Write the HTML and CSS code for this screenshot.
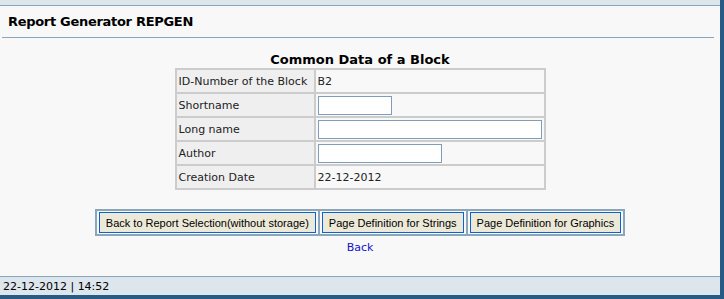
FILE: index.html
```html
<!DOCTYPE html>
<html lang="en">
<head>
    <meta charset="UTF-8">
    <title>Report Generator REPGEN</title>
    <link rel="stylesheet" href="styles.css">
</head>
<body>
    <div class="frame">
        <div class="topbar"></div>

        <div class="header">
            <h1>Report Generator REPGEN</h1>
        </div>

        <div class="main">
            <table class="data-table">
                <caption>Common Data of a Block</caption>
                <tr>
                    <td class="label">ID-Number of the Block</td>
                    <td class="value">B2</td>
                </tr>
                <tr>
                    <td class="label">Shortname</td>
                    <td class="value"><input type="text" class="field field-short" autofocus></td>
                </tr>
                <tr>
                    <td class="label">Long name</td>
                    <td class="value"><input type="text" class="field field-long"></td>
                </tr>
                <tr>
                    <td class="label">Author</td>
                    <td class="value"><input type="text" class="field field-mid"></td>
                </tr>
                <tr>
                    <td class="label">Creation Date</td>
                    <td class="value">22-12-2012</td>
                </tr>
            </table>

            <table class="button-table">
                <tr>
                    <td><button class="btn">Back to Report Selection(without storage)</button></td>
                    <td><button class="btn">Page Definition for Strings</button></td>
                    <td><button class="btn">Page Definition for Graphics</button></td>
                </tr>
            </table>

            <a href="#" class="back-link">Back</a>
        </div>

        <div class="footer">22-12-2012 | 14:52</div>
    </div>
</body>
</html>
```

FILE: styles.css
```css
* {
    box-sizing: border-box;
}

html, body {
    margin: 0;
    padding: 0;
}

body {
    font-family: "DejaVu Sans", Verdana, sans-serif;
    font-size: 11px;
    color: #000;
    background-color: #f8f8f8;
}

.frame {
    height: 100vh;
    display: flex;
    flex-direction: column;
    border-right: 4px solid #285a86;
    border-bottom: 4px solid #285a86;
}

.topbar {
    height: 6px;
    background-color: #dde5ed;
    border-bottom: 1px solid #8aa6ba;
}

.header {
    height: 32px;
    margin: 0 6px 0 2px;
    padding: 0 6px;
    display: flex;
    align-items: center;
    border-bottom: 1px solid #8aa6ba;
}

.header h1 {
    margin: 0;
    font-size: 13px;
    font-weight: bold;
    letter-spacing: -0.3px;
}

.main {
    flex: 1;
    display: flex;
    flex-direction: column;
    align-items: center;
    padding-top: 14px;
}

.data-table {
    width: 371px;
    border: 1px solid #cccccc;
    border-spacing: 0;
}

.data-table caption {
    font-size: 13px;
    font-weight: bold;
    padding-bottom: 1px;
}

.data-table td {
    height: 24px;
    padding: 0 2px;
    border: 1px solid #cccccc;
    color: #222;
}

.data-table .label {
    width: 143px;
    background-color: #efefef;
}

.data-table .value {
    background-color: #f8f8f8;
}

.field {
    display: block;
    height: 19px;
    margin: 0;
    padding: 0 2px;
    border: 1px solid #7f9db9;
    background-color: #fff;
    font-family: inherit;
    font-size: 11px;
    caret-color: #000;
}

.field:focus {
    outline: none;
}

.field-short {
    width: 74px;
}

.field-long {
    width: 224px;
}

.field-mid {
    width: 124px;
}

.button-table {
    margin-top: 19px;
    border: 1px solid #8aa6ba;
    border-spacing: 0;
}

.button-table td {
    padding: 1px 2px;
    border: 1px solid #8aa6ba;
}

.btn {
    height: 21px;
    padding: 0 6px;
    border: 1px solid #0a62d6;
    background-color: #ece9d8;
    font-family: "Liberation Sans", Arial, sans-serif;
    font-size: 11px;
    color: #000;
    cursor: pointer;
}

.back-link {
    margin-top: 5px;
    color: #1212cc;
    text-decoration: none;
}

.footer {
    height: 19px;
    padding: 3px 3px 0;
    background-color: #dde5ed;
    border-top: 1px solid #8aa6ba;
}
```
